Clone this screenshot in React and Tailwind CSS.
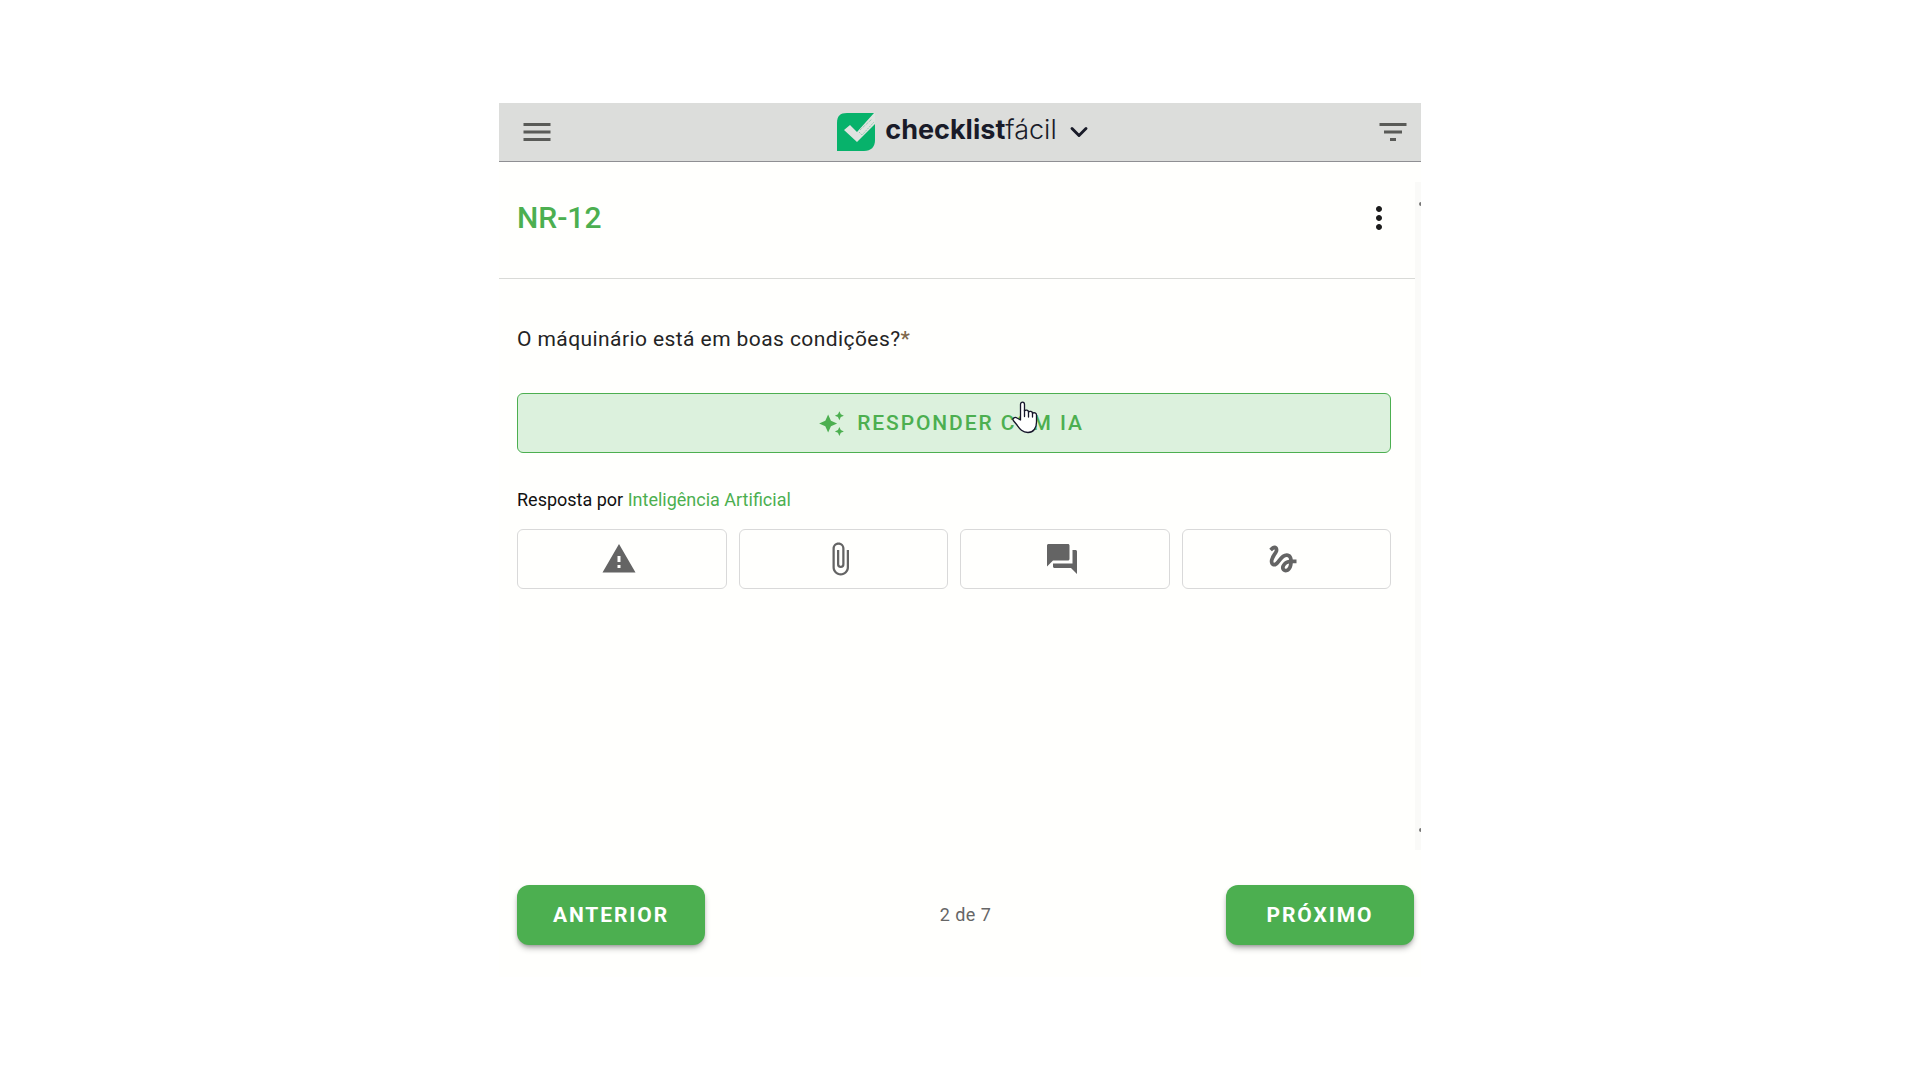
import { ChevronDown } from "lucide-react";
import {
  MdAttachFile,
  MdAutoAwesome,
  MdFilterList,
  MdForum,
  MdGesture,
  MdMenu,
  MdMoreVert,
  MdWarning,
} from "react-icons/md";

const actions = [
  { label: "Plano de ação", icon: MdWarning },
  { label: "Anexar arquivo", icon: MdAttachFile },
  { label: "Comentário", icon: MdForum },
  { label: "Assinatura", icon: MdGesture },
];

const LogoMark = () => (
  <svg width="38" height="38" viewBox="0 0 38 38" aria-hidden="true">
    <path d="M10 0H37L38 3V27C38 34 34 38 27 38H0V10C0 3 3 0 10 0Z" fill="#07b26b" />
    <path d="M7 17L13 12L20 19L37 0H38V11L20 29Z" fill="#e0e3e0" />
    <path d="M23 17L35 6" stroke="#6fc49c" strokeWidth="1" strokeDasharray="1 1" />
    <path d="M22 19L25 22L37 9" fill="none" stroke="#8fcdb0" strokeWidth="1" strokeDasharray="2 1" />
  </svg>
);

const HandCursor = () => (
  <svg width="26" height="33" viewBox="0 0 26 33" aria-hidden="true">
    <path
      d="M8.5 19V3.5C8.5 .3 12.5 .3 12.5 3.5V10C13.5 8.500 16.500 9 16.500 11C17.500 9.800 20.500 10.300 20.500 12.200C22 11.200 24.500 12 24.500 14V21C24.500 27 21.500 31.500 16 31.500C10 31.500 7.500 27.500 5 24L1.300 19.500C0 17.200 3 15.500 5 17Z"
      fill="#fff"
      stroke="#15152a"
      strokeWidth="1.300"
      strokeLinejoin="round"
    />
    <path d="M12.500 9V15.500M16.500 11V16M20.500 12V16" stroke="#15152a" strokeWidth="1.300" strokeLinecap="round" />
  </svg>
);

const Header = () => (
  <header className="flex h-[59px] items-center justify-between border-b border-[#8f8f93] bg-[#dcdddb] pl-5 pr-[10px] text-[#595a57]">
    <button type="button" aria-label="Menu">
      <MdMenu size={36} />
    </button>
    <button type="button" className="flex items-center text-[#191b29]">
      <LogoMark />
      <span className="ml-2.5 pb-1 font-['Inter',sans-serif] text-[27px] leading-8">
        <span className="font-bold">checklist</span>
        <span className="font-light">fácil</span>
      </span>
      <ChevronDown size={28} strokeWidth={2.5} className="ml-2" />
    </button>
    <button type="button" aria-label="Filtrar">
      <MdFilterList size={36} />
    </button>
  </header>
);

const Question = () => (
  <main className="min-h-[571px] pt-[45px] pl-[18px] pr-6">
    <p className="text-[21px] leading-[30px] tracking-[0.02em] text-[#242424]">
      O máquinário está em boas condições?<span className="font-medium text-[#80684c]">*</span>
    </p>

    <div className="relative mt-[39px]">
      <button
        type="button"
        className="flex h-[60px] w-full items-center justify-center gap-3 rounded-md border border-[#4caf50] bg-[#dcf1dd] pr-1.5 text-[21px] font-medium tracking-[0.09em] text-[#4caf50]"
      >
        <MdAutoAwesome size={27} />
        <span className="pt-0.5">RESPONDER COM IA</span>
      </button>
      <span className="pointer-events-none absolute top-2 left-[495px]">
        <HandCursor />
      </span>
    </div>

    <p className="mt-8 text-lg leading-[30px] text-[#111]">
      Resposta por <span className="text-[#4caf50]">Inteligência Artificial</span>
    </p>

    <div className="mt-[14px] grid grid-cols-4 gap-3">
      {actions.map(({ label, icon: Icon }) => (
        <button
          key={label}
          type="button"
          aria-label={label}
          className="flex h-[60px] items-center justify-center rounded-md border border-[#d9d9d9] pr-1.5 text-[#646464]"
        >
          <Icon size={36} />
        </button>
      ))}
    </div>
  </main>
);

const NavButton = ({ children }) => (
  <button
    type="button"
    className="h-[60px] w-[188px] rounded-xl bg-[#4caf50] pt-0.5 text-[21px] font-bold tracking-[0.09em] text-white shadow-md shadow-black/30"
  >
    {children}
  </button>
);

const Footer = () => (
  <footer className="flex items-center justify-between pt-[35px] pr-[7px] pb-8 pl-[18px]">
    <NavButton>ANTERIOR</NavButton>
    <span className="text-lg tracking-wide text-[#666]">2 de 7</span>
    <NavButton>PRÓXIMO</NavButton>
  </footer>
);

export default function App() {
  return (
    <div className="min-h-screen bg-white px-4 pt-[103px] font-['Roboto',sans-serif]">
      <div className="mx-auto w-full max-w-[922px] bg-[#fffffd]">
        <Header />
        <div className="flex">
          <div className="grow">
            <div className="flex h-[117px] items-center justify-between border-b border-[#d9dad7] pr-[18px] pb-1 pl-[18px]">
              <h1 className="text-3xl font-medium text-[#4caf50]">NR-12</h1>
              <button type="button" aria-label="Mais opções" className="text-[#1c1c1c]">
                <MdMoreVert size={36} />
              </button>
            </div>
            <Question />
          </div>
          <div className="mt-5 flex w-[6px] flex-col items-end justify-between bg-[#fafaf8] pt-5 pb-[18px]">
            <span className="h-1 w-0.5 rounded-l-full bg-[#777]" />
            <span className="h-1 w-0.5 rounded-l-full bg-[#777]" />
          </div>
        </div>
        <Footer />
      </div>
    </div>
  );
}
